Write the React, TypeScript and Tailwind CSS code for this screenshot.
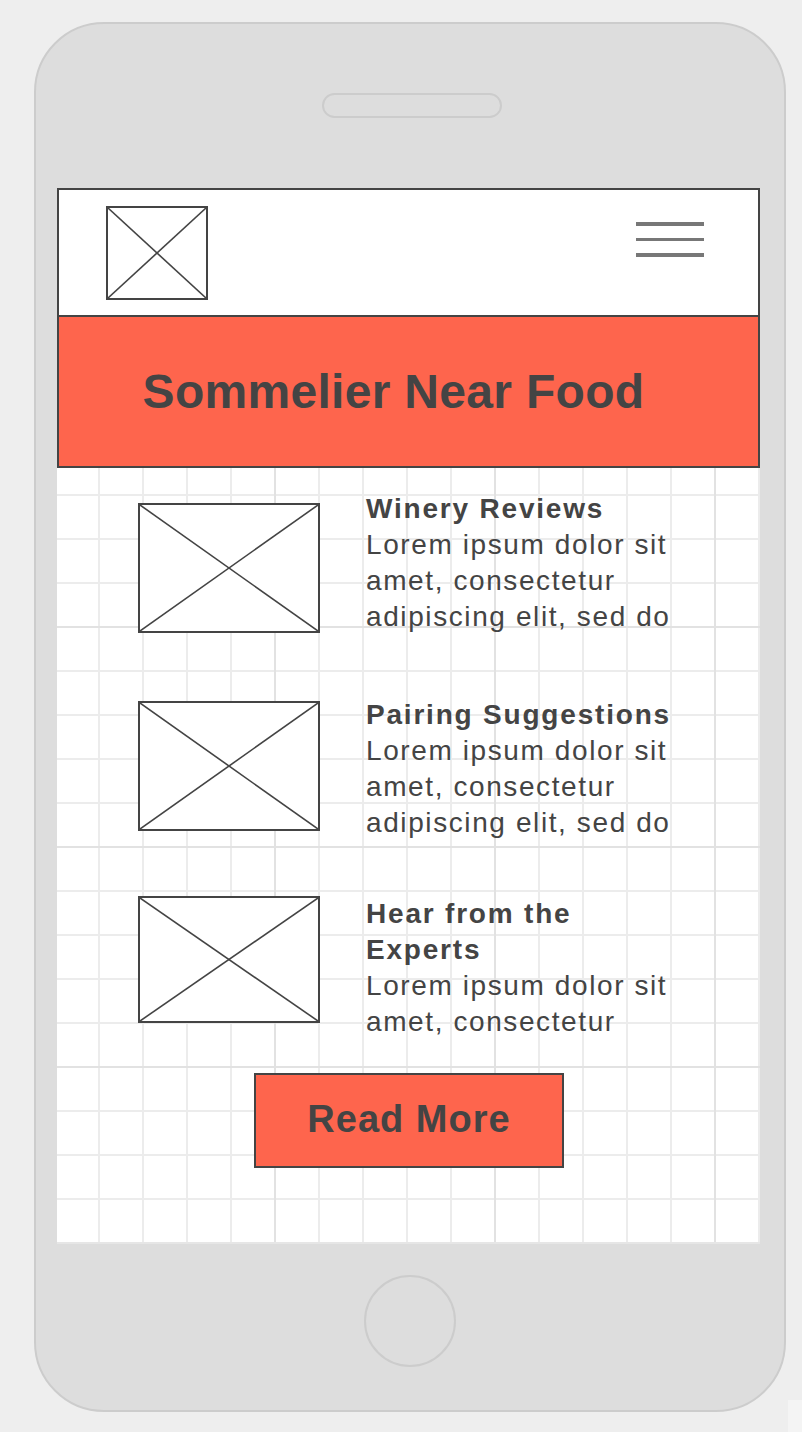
const FONT = "font-['Liberation_Sans',Arial,sans-serif]";

const rows = [
  {
    title: 'Winery Reviews',
    body: 'Lorem ipsum dolor sit amet, consectetur adipiscing elit, sed do',
    rowClass: 'mt-[23px]',
    imgClass: 'mt-[12px] h-[130px]',
  },
  {
    title: 'Pairing Suggestions',
    body: 'Lorem ipsum dolor sit amet, consectetur adipiscing elit, sed do',
    rowClass: 'mt-[62px]',
    imgClass: 'mt-[4px] h-[130px]',
  },
  {
    title: 'Hear from the Experts',
    body: 'Lorem ipsum dolor sit amet, consectetur',
    rowClass: 'mt-[55px]',
    imgClass: 'mt-0 h-[127px]',
  },
];

function Placeholder({ className }: { className: string }) {
  return (
    <div className={`relative border-2 border-[#444] bg-white ${className}`}>
      <svg className="absolute inset-0 h-full w-full" viewBox="0 0 100 100" preserveAspectRatio="none">
        <line x1="0" y1="0" x2="100" y2="100" stroke="#444" strokeWidth="1.6" vectorEffect="non-scaling-stroke" />
        <line x1="100" y1="0" x2="0" y2="100" stroke="#444" strokeWidth="1.6" vectorEffect="non-scaling-stroke" />
      </svg>
    </div>
  );
}

function Hamburger() {
  return (
    <div className="flex w-[68px] flex-col gap-[12px]">
      <span className="h-[3.5px] bg-[#777]" />
      <span className="h-[3.5px] bg-[#777]" />
      <span className="h-[3.5px] bg-[#777]" />
    </div>
  );
}

export default function App() {
  return (
    <div className={`relative h-[1432px] w-[802px] overflow-hidden bg-[#eeeeee] pt-[22px] pl-[34px] ${FONT}`}>
      {/* phone body */}
      <div className="flex h-[1390px] w-[752px] flex-col rounded-[70px] border-2 border-[#cccccc] bg-[#dddddd]">
        <div className="mt-[69px] ml-[286px] h-[25px] w-[180px] rounded-full border-2 border-[#cccccc]" />

        {/* screen */}
        <div className="mt-[70px] ml-[21px] w-[703px]">
          <div className="flex h-[127px] items-start justify-between border-2 border-b-0 border-[#444] bg-white pl-[47px] pr-[54px] pt-[16px]">
            <Placeholder className="h-[94px] w-[102px]" />
            <div className="pt-[16px]">
              <Hamburger />
            </div>
          </div>
          <div className="flex h-[153px] items-center justify-center border-2 border-[#444] bg-[#fe654d] pr-[30px]">
            <h1 className="text-[48px] font-bold leading-none tracking-[0.3px] text-[#444]">Sommelier Near Food</h1>
          </div>

          <div className="flex h-[776px] flex-col border-b-2 border-[#e6e6e6] bg-white bg-[linear-gradient(to_right,#e2e2e2_2px,transparent_2px),linear-gradient(to_bottom,#e2e2e2_2px,transparent_2px),linear-gradient(to_right,#ececec_2px,transparent_2px),linear-gradient(to_bottom,#ececec_2px,transparent_2px)] bg-[size:220px_220px,220px_220px,44px_44px,44px_44px] bg-[position:217px_158px,217px_158px,-3px_26px,-3px_26px]">
            {rows.map((row) => (
              <div key={row.title} className={`flex items-start ${row.rowClass}`}>
                <Placeholder className={`ml-[81px] w-[182px] shrink-0 ${row.imgClass}`} />
                <div className="ml-[46px] w-[330px] text-[28px] leading-[36px] text-[#444]">
                  <h2 className="w-[310px] font-bold tracking-[1.8px]">{row.title}</h2>
                  <p className="w-[316px] tracking-[1.6px]">{row.body}</p>
                </div>
              </div>
            ))}

            <button className="mt-[33px] ml-[197px] flex h-[95px] w-[310px] items-center justify-center border-2 border-[#444] bg-[#fe654d] pb-[2px] text-[38px] font-bold tracking-[1px] text-[#444]">
              Read More
            </button>
          </div>
        </div>

        <div className="mt-[31px] ml-[328px] h-[92px] w-[92px] rounded-full border-2 border-[#cccccc]" />
      </div>

      <div className="absolute top-[1400px] left-[788px] h-[32px] w-[14px] bg-[#f4f4f4]" />
    </div>
  );
}
